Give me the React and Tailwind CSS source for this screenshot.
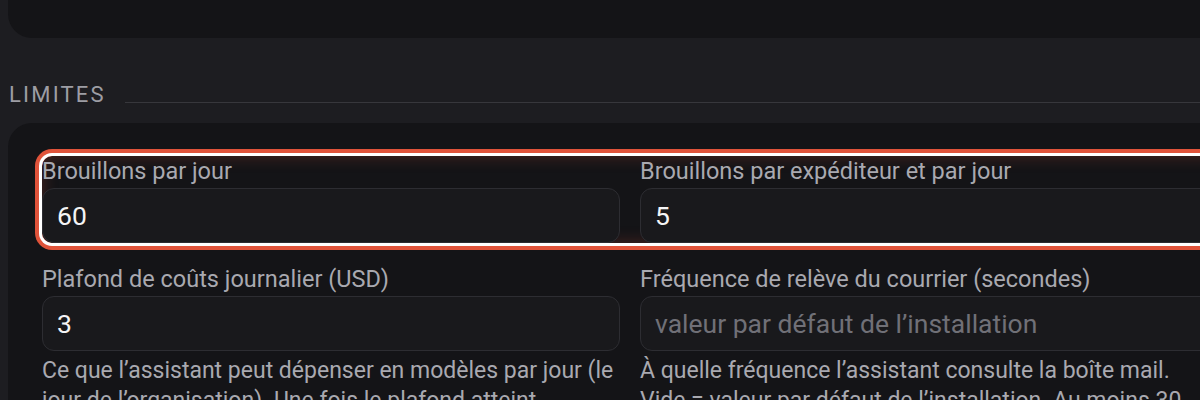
const fieldFont = { fontFamily: 'Roboto, Inter, "Noto Sans", sans-serif' };

function Field({ label, value, placeholder, help }) {
  return (
    <div className="flex flex-col gap-[2px]">
      <label className="text-[23.5px] leading-[30px] text-[#a9a9b0]">{label}</label>
      <div className="flex h-[55px] items-center rounded-[12px] border border-[#2d2d32] bg-[#19191c] px-[14px]">
        {value ? (
          <span className="text-[26.5px] text-[#f4f4f5]">{value}</span>
        ) : (
          <span className="text-[26.5px] text-[#707077]">{placeholder}</span>
        )}
      </div>
      {help ? <p className="mt-[3px] text-[23px] leading-[30px] text-[#a9a9b0]">{help}</p> : null}
    </div>
  );
}

export default function App() {
  return (
    <div style={fieldFont} className="h-[400px] w-[1200px] overflow-hidden bg-[#1d1d21]">
      <div className="mx-[8px] -mt-[62px] h-[100px] w-[1260px] rounded-[24px] bg-[#141417] px-[30px] pt-[28px]">
        <p className="text-[24px] leading-[30px] text-[#f4f4f5]">Approbation</p>
      </div>

      <div className="ml-[9px] mt-[43px] flex items-end gap-[19px]">
        <h3 className="text-[22px] leading-[28px] uppercase tracking-[0.1em] text-[#9d9da4]">Limites</h3>
        <div className="mb-[6px] h-px flex-1 bg-[#37373c]" />
      </div>

      <div className="ml-[8px] mt-[14px] w-[1260px] rounded-[24px] bg-[#141417] px-[34px] pt-[33px]">
        <div className="grid grid-cols-[578px_578px] gap-x-[20px] rounded-[10px] shadow-[0_0_0_3px_#ffffff,0_0_0_7px_#e0533a,inset_0_0_16px_rgba(224,83,58,0.28)]">
          <Field label="Brouillons par jour" value="60" />
          <Field label="Brouillons par expéditeur et par jour" value="5" />
        </div>
        <div className="mt-[21px] grid grid-cols-[578px_578px] gap-x-[20px]">
          <Field
            label="Plafond de coûts journalier (USD)"
            value="3"
            help="Ce que l’assistant peut dépenser en modèles par jour (le jour de l’organisation). Une fois le plafond atteint, l’assistant s’arrête."
          />
          <Field
            label="Fréquence de relève du courrier (secondes)"
            placeholder="valeur par défaut de l’installation"
            help={
              <>
                À quelle fréquence l’assistant consulte la boîte mail.
                <br />
                Vide = valeur par défaut de l’installation. Au moins 30 secondes.
              </>
            }
          />
        </div>
      </div>
    </div>
  );
}
